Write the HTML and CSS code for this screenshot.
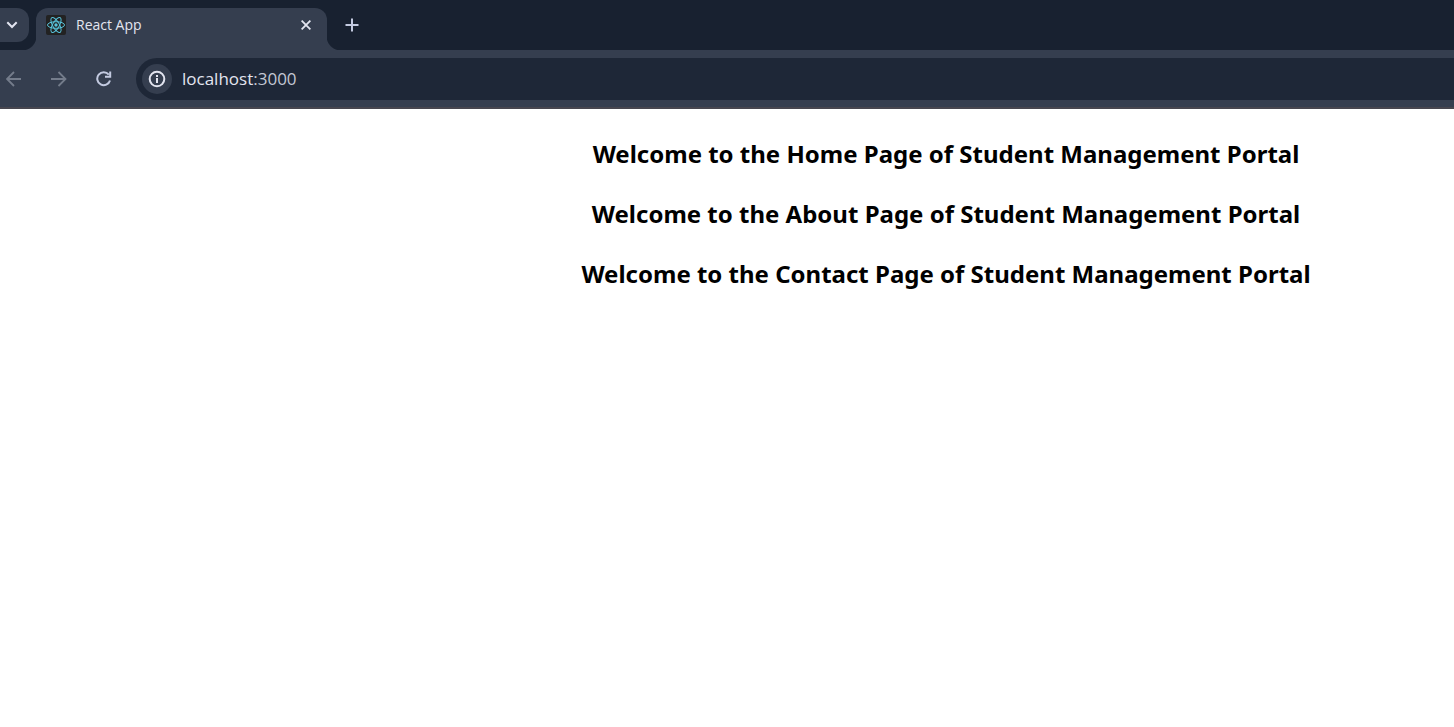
FILE: index.html
```html
<!DOCTYPE html>
<html lang="en">
<head>
<meta charset="utf-8">
<title>React App</title>
<link rel="stylesheet" href="styles.css">
</head>
<body>
<header class="browser">
  <div class="tab-strip">
    <button class="tab-search" type="button" aria-label="Search tabs">
      <svg width="12" height="8" viewBox="0 0 12 8" fill="none" stroke="#e3e5f0" stroke-width="2"><path d="M1.300 1.300 6 6l4.700-4.700"/></svg>
    </button>
    <div class="tab">
      <svg class="favicon" width="20" height="20" viewBox="0 0 20 20" fill="none" stroke="#58c4dc" stroke-width="1">
        <rect width="20" height="20" rx="2" fill="#222222" stroke="none"/>
        <ellipse cx="10" cy="10" rx="8.500" ry="3.300"/>
        <ellipse cx="10" cy="10" rx="8.500" ry="3.300" transform="rotate(60 10 10)"/>
        <ellipse cx="10" cy="10" rx="8.500" ry="3.300" transform="rotate(120 10 10)"/>
        <circle cx="10" cy="10" r="1.700" fill="#58c4dc" stroke="none"/>
      </svg>
      <span class="tab-title">React App</span>
      <button class="tab-close" type="button" aria-label="Close tab">
        <svg width="10" height="10" viewBox="0 0 10 10" fill="none" stroke="#e3e5f0" stroke-width="1.800"><path d="m.6.6 8.800 8.800m0-8.800L.6 9.400"/></svg>
      </button>
    </div>
    <button class="new-tab" type="button" aria-label="New tab">
      <svg width="14" height="14" viewBox="0 0 14 14" fill="none" stroke="#c3cae0" stroke-width="2"><path d="M7 .5v13M.5 7h13"/></svg>
    </button>
  </div>
  <nav class="toolbar" aria-label="Browser toolbar">
    <button class="nav-button" type="button" aria-label="Back" disabled>
      <svg width="16" height="16" viewBox="0 0 16 16" fill="none" stroke="#747c8b" stroke-width="1.800"><path d="M15 8H1.500M8 1 1 8l7 7"/></svg>
    </button>
    <button class="nav-button" type="button" aria-label="Forward" disabled>
      <svg width="16" height="16" viewBox="0 0 16 16" fill="none" stroke="#747c8b" stroke-width="1.800"><path d="M0 8h14M7.500 1l7 7-7 7"/></svg>
    </button>
    <button class="nav-button" type="button" aria-label="Reload">
      <svg width="16" height="16" viewBox="0 0 16 16" fill="none" stroke="#c3cae0" stroke-width="2"><path d="M12.800 3.600A6.500 6.500 0 1 0 14 9.500M14.200.5v5.200H9"/></svg>
    </button>
    <div class="address-bar">
      <button class="site-info" type="button" aria-label="View site information">
        <svg width="18" height="18" viewBox="0 0 18 18" fill="none" stroke="#e3e5f0" stroke-width="2"><circle cx="9" cy="9" r="7.300"/><path d="M9 8v5M9 5v2"/></svg>
      </button>
      <div class="address" role="textbox" aria-label="Address" tabindex="0">localhost<span class="port">:3000</span></div>
    </div>
  </nav>
</header>
<main class="page">
  <h2 class="welcome">Welcome to the Home Page of Student Management Portal</h2>
  <h2 class="welcome">Welcome to the About Page of Student Management Portal</h2>
  <h2 class="welcome">Welcome to the Contact Page of Student Management Portal</h2>
</main>
</body>
</html>
```

FILE: styles.css
```css
* {
  box-sizing: border-box;
}

body {
  margin: 0;
  background: #ffffff;
  color: #000000;
  font-family: "Open Sans", sans-serif;
}

button {
  display: flex;
  align-items: center;
  justify-content: center;
  flex: none;
  padding: 0;
  border: 0;
  background: transparent;
}

.tab-strip {
  display: flex;
  height: 50px;
  padding-top: 8px;
  background: #182130;
}

.tab-search {
  position: relative;
  z-index: 1;
  width: 29px;
  height: 34px;
  padding-right: 5px;
  border-radius: 0 12px 12px 0;
  background: #353e4f;
}

.tab {
  position: relative;
  display: flex;
  align-items: center;
  width: 291px;
  margin-left: 7px;
  padding: 0 16px 8px 10px;
  border-radius: 12px 12px 0 0;
  background: #353e4f;
}

.tab::before,
.tab::after {
  content: "";
  position: absolute;
  bottom: 0;
  width: 14px;
  height: 14px;
}

.tab::before {
  right: 100%;
  background: radial-gradient(circle at 0 0, #182130 14px, #353e4f 15px);
}

.tab::after {
  left: 100%;
  background: radial-gradient(circle at 100% 0, #182130 14px, #353e4f 15px);
}

.tab-title {
  flex: 1;
  margin-left: 10px;
  color: #e3e5f0;
  font-size: 14px;
  line-height: 20px;
}

.new-tab {
  width: 34px;
  height: 34px;
  margin-left: 8px;
}

.toolbar {
  display: flex;
  align-items: center;
  gap: 29px;
  padding: 8px 0 7px 6px;
  border-bottom: 2px solid #47464f;
  background: #353e4f;
}

.nav-button {
  width: 16px;
  height: 16px;
}

.address-bar {
  display: flex;
  flex: 1;
  align-items: center;
  gap: 10px;
  height: 42px;
  margin-left: -5px;
  padding-left: 6px;
  border-radius: 21px 0 0 21px;
  background: #1e2737;
}

.site-info {
  width: 30px;
  height: 30px;
  border-radius: 50%;
  background: #353e4f;
}

.address {
  flex: 1;
  color: #e3e5f0;
  font-size: 17px;
  line-height: 24px;
}

.port {
  color: #c3c8d4;
}

.page {
  display: grid;
  gap: 24px;
  padding: 27px 0 27px 438px;
  text-align: center;
}

.welcome {
  margin: 0;
  font-family: "Noto Sans", sans-serif;
  font-size: 24px;
  font-weight: 700;
  line-height: 36px;
}
```
